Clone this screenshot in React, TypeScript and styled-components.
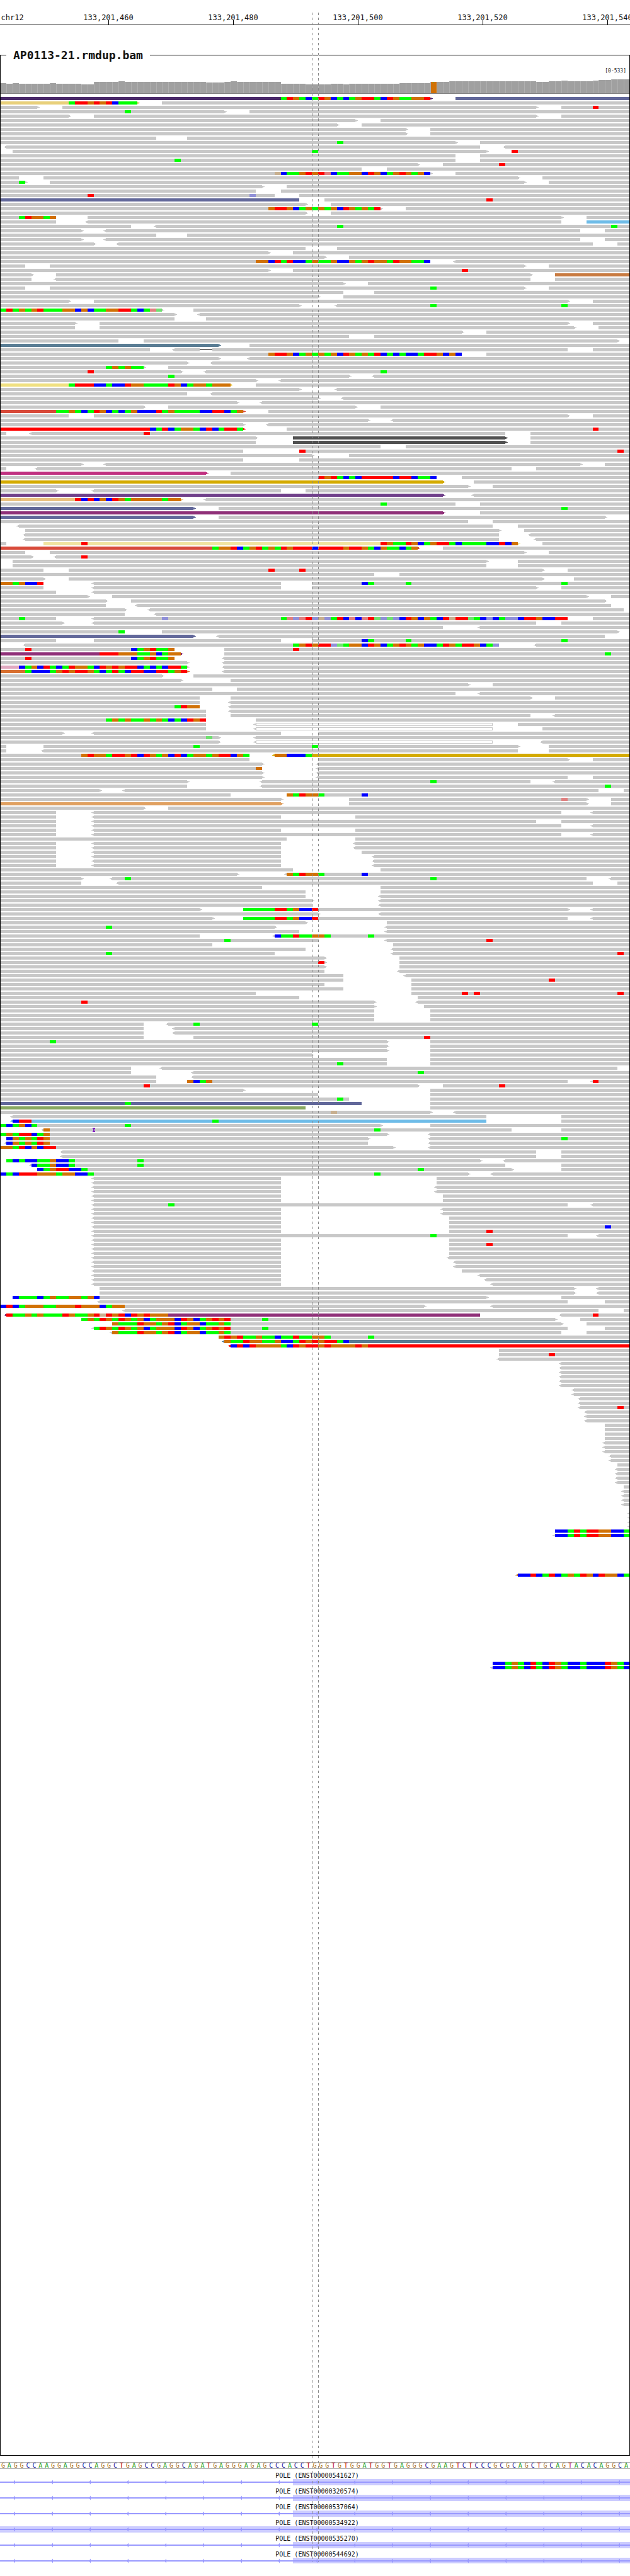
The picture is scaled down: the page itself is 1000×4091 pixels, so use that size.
import React from "react";
import styled, { createGlobalStyle } from "styled-components";

const BASE_W = 9.9;
const px = (i: number) => Math.round(BASE_W * i);

const BASE_COLOR: Record<string, string> = { A: "#00ff00", C: "#0000ff", G: "#d17105", T: "#ff0000" };
const FADED_COLOR: Record<string, string> = { a: "#70e070", c: "#9090d8", g: "#c8b090", t: "#e08080" };
const LETTER_COLOR: Record<string, string> = { A: "#20a020", C: "#2020a0", G: "#b07a30", T: "#c00000" };
const READ_COLOR: Record<string, string> = {
  p: "#4a2a6a", s: "#62689a", y: "#e8d07a", k: "#6ebce8", b: "#5a7d94", o: "#d87030", R: "#ff0000",
  d: "#505050", e: "#c87a40", r: "#d84a3a", M: "#c03080", u: "#d4aa00", v: "#70408a", t: "#e8c080",
  m: "#8f2f78", w: "#f0e4a0", i: "#e0a8c0", n: "#88a860", l: "#f0e080", q: "#e0a060",
};

const ROWS: string[] = [
  "0-69p> @45:ATGACATGCACAGTTACTGAAGGT 73-101s",
  "0-22y> @11:ATTGTGTCAAA 26-101",
  "0-6> 10-86> 90-101 @95:T",
  "0-36> 40-101 @20:A",
  "0-11> 15-86> 90-101",
  "0-57> 61-101",
  "0-54> 58-101",
  "0-65> 69-101",
  "0-65> 69-101",
  "0-25 30-101",
  "0-73> 77-101 @54:A",
  "<1-77 <81-101",
  "2-78> 82-101 @50:A @82:T",
  "0-73 77-101",
  "0-73 77-101 @28:A",
  "0-67> 71-101 @80:T",
  "0-58 62-101",
  "0-69> @44:gCAAGTGTtCAAGGCTGCAGTGAGC 73-101",
  "0-3 7-83> 87-101",
  "0-4> @3:A 8-84> 88-101",
  "0-42> 46-101",
  "0-41 45-101",
  "0-44 48-101 @14:T @40:c",
  "0-48s 52-101 @78:T",
  "0-49> 53-101",
  "0-61> @43:GTTGCAGAGAGCTGAGAT 65-101",
  "0-49> 53-101",
  "0-9 @3:ATGGAG 14-90> 94-101",
  "0-9 <14-90 94-101k",
  "0-21 <25-101 @54:A @98:A",
  "0-13> <17-93 97-101",
  "0-25 30-101",
  "0-13> <17-93 97-101",
  "0-15> <19-95 99-101",
  "0-49 54-101",
  "0-43> 47-101",
  "0-52> 56-101",
  "0-69 @41:GGCTATCCAGAAGCCGAGTGGATGGAAC <73-101",
  "0-4 8-84> 88-101",
  "0-43> 47-101 @74:T",
  "0-5> 9-85> 89-101e",
  "0-5 <9-85 89-101",
  "0-55> 59-101",
  "0-4 8-84> 88-101 @69:A",
  "0-55 60-101",
  "0-51> 55-101",
  "0-11> 15-91> 95-101",
  "0-48> <54-101 @69:A @90:A",
  "0-26> @0:ATAGAGTAAAGGCGCAAGGTTACAta 31-101",
  "0-28> <32-101",
  "0-28 33-101",
  "0-12> 16-91> 95-101",
  "0-12 16-92> 96-101",
  "0-74> 78-101",
  "0-56 60-101",
  "0-19 23-99>",
  "0-35b> 40-101",
  "0-24 <28-91 D32-34 95-101",
  "0-74 @43:GTTGCAGAGAGCTGAGATCACACCATTGCGC 78-101",
  "0-35> <40-101",
  "0-30> <34-101",
  "0-23> @17:AGAGAA 27-101",
  "0-29> @14:T <33-101 @61:A",
  "0-56> @27:A <60-101",
  "0-41> <45-101",
  "0-37l> @11:ATTTCCACCTGGAAAATGCAGGAGGG 41-101",
  "0-48> <54-101",
  "0-30 <34-101",
  "0-51> <55-101",
  "0-38> <42-101",
  "0-23> 27-57> 61-101",
  "0-39r> @9:AAGACATGCACAGCCCTAGAAAACCTTCAG 43-101",
  "0-11 15-91> 95-101",
  "0-59> <63-101",
  "0-39> <43-101",
  "0-39R> @24:CATCAGGACTCATTA 46-101 @95:T",
  "0-1 <5-81 @23:T 85-101",
  "0-41> 47-81d> 85-101",
  "0-41 47-81d> 85-101",
  "0-61 65-101",
  "0-39 48-101 @48:T @99:T",
  "0-50> 56-101",
  "0-39 48-101",
  "0-13> <17-93> 97-101",
  "0-1 <6-82 86-101",
  "0-33M> 37-101",
  "0-70 @51:TGTACACTTTTTCTTCAAC 74-101",
  "0-71u> 76-101",
  "0-75> 79-101",
  "0-9> <15-45 49-101",
  "0-71v> <76-101",
  "0-29t> @12:TCTCGCTGAGGGGGAGG <33-101",
  "0-73 @61:A 77-101",
  "0-31s> 35-101 @90:A",
  "0-71m> 77-101",
  "0-31s> 35-97>",
  "0-75 79-101",
  "<3-79 83-101",
  "4-80> 84-101",
  "<4-80 <85-101",
  "<4-80 <86-101",
  "0-1 7-83w> @13:T @61:TGAATGCAGTTACAAAACCTCG 87-101",
  "0-67r> @34:AGGTCAGTAGATGTTTCTTTTGTTGACGAACAG 71-101",
  "0-4 8-84> 88-101",
  "0-5> <9-101 @13:T",
  "2-78> 83-101",
  "2-78 83-101",
  "0-7 11-87> 91-101 @43:T @48:T",
  "0-60 64-101",
  "0-7> 11-87> 92-101",
  "0-7 @0:GGAGCCT <15-45 50-101 @58:CA @65:A @90:A",
  "0-7 <15-45 50-86> 90-101",
  "0-9 <15-101",
  "0-14> 18-94> 98-101",
  "0-17> 21-97>",
  "0-17 <22-98",
  "0-20> <24-100",
  "0-20 <25-101",
  "0-9 @3:A <15-91 @26:c @45:AtctTcgcATCtCtTacacCTGCGACTgTTaACcCAccCTTGCCTT 95-101",
  "0-10> <15-86 90-101",
  "0-71 <77-101",
  "0-20 @19:A 26-99>",
  "0-31s> <35-97",
  "0-9 15-45 50-101 @58:CA @65:A @90:A",
  "<4-80 @47:AGTGTTcaAGGCTGCAGTGAGCCATGATTGCAc <86-101",
  "0-28 @4:T @21:CAGTAAG 36-101 @47:T",
  "0-29m> @16:TTTGGGAAGCAGG 36-101 @97:A",
  "0-28 @4:T @21:CAGTAAG <36-101",
  "0-30> <36-101",
  "0-30i> @3:CAGCTACATGGACTGTGTTCACACTTA <36-101",
  "0-30o> @4:ACCCAGTGTTGACATACTTCCTTAGT <36-101",
  "0-26> 31-101",
  "0-29> 37-101",
  "0-75> 79-101",
  "0-34 38-101",
  "0-73 <77-101",
  "0-32 37-85> 89-101",
  "0-32 <37-101",
  "0-32 @28:ATGG <37-101",
  "0-33 <37-101",
  "0-33 37-85 <89-101",
  "0-33 @17:AGAGAAGAGACACTGT 41-101",
  "0-33 <41-79h 83-101",
  "0-33 <41-79h 87-101",
  "0-10> <15-45 51-101",
  "0-35> @33:a <41-101",
  "0-35> <41-79h <87-101",
  "0-1 7-83> @31:A @50:A 88-101",
  "0-1 <7-83 88-101",
  "0-40 @13:GTGGATTGTCTGAGCTCAGGAGTTCGA <44-101u @44:GGCCCA",
  "0-40 51-91> 95-101",
  "0-42> <51-101",
  "0-42 @41:G <51-101",
  "0-42> <51-101",
  "0-42> <51-91 95-101",
  "0-30> <42-85 <89-101 @69:A",
  "0-30 <42-101 @97:A",
  "0-16> <20-96 100-101",
  "0-37 46-101 @46:GATGGA @58:C",
  "0-45> 56-94> @90:t 98-101",
  "0-45q> 56-94> 98-101",
  "0-23> 27-101",
  "0-9 <15-90 <95-101",
  "0-9 <15-45 57-101",
  "0-9 <15-86 90-101",
  "0-9 <15-90 <95-101",
  "0-9 <15-45 57-101",
  "0-9 <15-90 <95-101",
  "0-46 57-101",
  "0-9 <15-45 <57-101",
  "0-9 <15-45 <57-101",
  "0-9 <15-45 58-101",
  "0-9 <15-45 <60-101",
  "0-9 <15-45 <60-101",
  "0-9 <15-45 <60-101",
  "0-47 61-101",
  "0-38> <46-101 @46:GATGGA @58:C",
  "0-13> <18-94 @20:A @69:A <98-101",
  "0-13 <19-95 99-101",
  "0-42 61-101",
  "0-49 61-101",
  "0-49 <61-101",
  "0-50> <61-101",
  "0-50 <61-101",
  "0-32> 39-91> @39:AAAAATTAGCCT <95-101",
  "0-51> <61-101",
  "0-34> 39-91 @39:AAAAATTAGCCT <95-101",
  "0-49> 62-101",
  "0-44> @17:A <62-101",
  "0-48 <62-101",
  "0-32 <44-101 @44:CAATAAGGA @59:A",
  "0-51 @36:A <62-101 @78:T",
  "0-34 63-101",
  "0-49 <63-101",
  "0-44 @17:A <63-101 @99:T",
  "0-52> 64-101",
  "0-52> @51:T 64-101",
  "0-52> 64-101",
  "0-52 <64-101",
  "0-55 <65-101",
  "0-55 66-101 @88:T",
  "0-52 66-101",
  "0-55 66-101",
  "0-41 66-101 @74:T @76:T @99:T",
  "0-48 67-101",
  "0-60> @13:T <67-101",
  "0-60> 68-101",
  "0-60 69-101",
  "0-60 69-101",
  "0-60 69-101",
  "0-23 <27-101 @31:A @50:A",
  "0-23 <28-101",
  "0-23 <28-101",
  "0-23 31-101 @68:T",
  "0-62> @8:A 69-101",
  "0-62> 69-101",
  "0-62> 69-101",
  "0-50> 69-101",
  "0-62 69-101",
  "0-62 @54:A 69-101",
  "0-21 <26-99",
  "0-21 <31-101 @67:A",
  "0-25 <31-101",
  "0-25 30-91 @30:GCAG <95-101 @95:T",
  "0-67> @23:T 71-101 @80:T",
  "0-39> 69-101",
  "0-51 69-101",
  "0-56 @54:A 69-101",
  "0-58s @20:A 69-101",
  "0-49n 69-101",
  "0-69> @53:g <73-101",
  "<2-78 90-101",
  "<2-78k @2:CTT @34:A 90-101",
  "0-61> @0:ACAGCA @20:A 69-101",
  "<7-82 @7:G @60:A I15 90-101",
  "0-62> @0:AGATTCAG <69-101",
  "1-59> @1:CGAGATG <69-101 @90:A",
  "<1-59 @1:CGAGATG <69-101",
  "0-63> @0:GGATCGCTT <69-101",
  "<10-86 90-101",
  "<10-86 90-101",
  "1-77> @1:ACACCAAGCCA @22:A <81-101",
  "<5-81 @5:CAAGCCA @22:A 90-101",
  "6-82> @6:CAGTTCCA @67:A 90-101",
  "0-75> @0:CACTTTGGGAGGCCA @60:A <79-101",
  "<15-45 70-101",
  "<15-45 70-101",
  "<15-45 <70-101",
  "<15-45 <70-101",
  "<15-45 71-101",
  "<15-45 71-101",
  "<15-91 @27:A <95-101",
  "<15-45 <71-101",
  "<15-45 <71-101",
  "<15-45 72-101",
  "<15-45 72-101",
  "<15-45 72-101 @97:C",
  "<15-45 72-101 @78:T",
  "<15-91 @69:A <96-101",
  "<15-45 72-101",
  "<15-45 72-101 @78:T",
  "<15-45 72-101",
  "<15-45 72-101",
  "<15-45 <72-101",
  "<15-45 <73-101",
  "<15-45 <73-101",
  "<15-45 74-101",
  "<15-45 <77-101",
  "<15-45 <78-101",
  "<15-45 <79-101",
  "16-92> <96-101",
  "16-92> <96-101",
  "2-78> @2:CAAACAGAAGGAGC 90-101",
  "<16-91 97-101",
  "0-68> @0:CTCAGGGAAGGGTGGGCAGG <79-101",
  "<20-96 100-101",
  "<1-77m @1:TAAGAGAAATGAAGTgTGTCTGTGGG <90-101 @95:T",
  "13-89> @13:AGATGATGAGCAGGGCTGCAGTGT @42:A 93-101",
  "18-90> @18:GAAATGGAGTCAGGCAAGA 94-101",
  "<15-91 @15:ATGATGAGCAGGGCTGCAGTGT @42:A 97-101",
  "<18-90 @18:GAAATGGAGTCAGGCAAGA 94-101",
  "35-101 @35:GTGTAAGAACAATAAGGA @59:A",
  "<36-101b @36:GAATGGAAGCCATGTGTTAC",
  "<37-101R @37:CTCTGGGGACTGTTGTGGGGTG",
  "80-101",
  "80-101 @88:T",
  "<80-101",
  "<90-101", "<90-101", "<90-101", "<90-101", "<90-101", "<90-101",
  "<92-101", "<92-101",
  "<93-101", "<93-101", "<93-101 @99:T",
  "<94-101", "<94-101", "<94-101",
  "97-101", "97-101", "97-101", "97-101",
  "<97-101", "<97-101", "<97-101",
  "<98-101", "<98-101",
  "99-101",
  "<99-101", "<99-101", "<99-101", "<99-101",
  "100-101",
  "<100-101", "<100-101", "<100-101", "<100-101",
  "",
  "<101-101", "<101-101", "<101-101", "<101-101",
  "89-101 @89:CCATATTGGCCA",
  "<89-101 @89:CCATATTGGCCA",
];
ROWS[335] = "<83-101e @83:CCTCATCAGATGCTGGCA";
ROWS[355] = "79-101 @79:CCAGACTACTGACCACCCTGAC";
ROWS[356] = "<79-101 @79:CCAGACTACTGACCACCCTGAC";

const COVERAGE: number[] = [
  16, 15, 16, 15, 15, 15, 15, 15, 16, 15, 15, 15, 15, 14, 14, 18, 18, 18, 18, 19, 18, 18, 18, 18, 18, 18, 18, 18, 18, 18,
  18, 18, 18, 17, 17, 17, 18, 19, 18, 18, 18, 18, 18, 18, 18, 15, 15, 15, 15, 14, 14, 14, 14, 15, 15, 14, 15, 15, 15, 15,
  15, 15, 15, 15, 16, 16, 16, 16, 16, 18, 18, 18, 19, 19, 19, 19, 19, 19, 19, 19, 19, 19, 19, 19, 19, 19, 18, 18, 19, 19,
  20, 19, 19, 19, 19, 20, 21, 21, 22, 22, 22,
];

const SEQUENCE =
  "GAGGCCAAGGAGGCCAGGCTGAGCCGAGGCAGATGAGGGAGAGCCCACCTGGGTGTGGATGGTGAGGGCGAAGTCTCCCGCGCAGCTGCAGTACACAGGCA";

const GENES = [
  { id: "ENST00000541627", exonFrom: 465, last: false },
  { id: "ENST00000320574", exonFrom: 465, last: false },
  { id: "ENST00000537064", exonFrom: 465, last: false },
  { id: "ENST00000534922", exonFrom: 0, last: false },
  { id: "ENST00000535270", exonFrom: 465, last: false },
  { id: "ENST00000544692", exonFrom: 465, last: true },
];

const TICKS = [
  { x: 172, label: "133,201,460" },
  { x: 370, label: "133,201,480" },
  { x: 568, label: "133,201,500" },
  { x: 766, label: "133,201,520" },
  { x: 964, label: "133,201,540" },
];

const GlobalStyle = createGlobalStyle`
  html, body { margin: 0; padding: 0; background: #fff; }
  body { font-family: "DejaVu Sans Mono", monospace; }
`;

const Page = styled.div`
  position: relative;
  width: 1000px;
  height: 4091px;
  overflow: hidden;
`;

const RulerSvg = styled.svg`
  display: block;
  width: 1000px;
  height: 40px;
`;

const RulerText = styled.text`
  font-family: "DejaVu Sans Mono", monospace;
  font-size: 12px;
  fill: #111;
`;

const TrackFrame = styled.fieldset`
  box-sizing: border-box;
  width: 1000px;
  height: 3824px;
  margin: 36px 0 0;
  padding: 0;
  border: 1px solid #000;
  min-width: 0;
`;

const TrackTitle = styled.legend`
  margin-left: 9px;
  padding: 0 11px;
  height: 23px;
  line-height: 23px;
  font-family: "DejaVu Sans Mono", monospace;
  font-weight: 700;
  font-size: 18px;
  color: #111;
`;

const Coverage = styled.div`
  position: relative;
  height: 50px;
`;

const RangeLabel = styled.span`
  position: absolute;
  right: 5px;
  top: 9px;
  font-size: 8px;
  line-height: 10px;
  color: #222;
`;

const TrackSvg = styled.svg`
  display: block;
  width: 998px;
`;

const SequenceBar = styled.div`
  display: grid;
  grid-template-columns: repeat(101, 9.9px);
  width: 1000px;
  height: 9px;
  margin-top: 10px;
  border-top: 1px solid #aaa;
  border-bottom: 1px solid #aaa;
  overflow: hidden;
`;

const BaseLetter = styled.span<{ $base: string }>`
  text-align: center;
  font-size: 10px;
  line-height: 9px;
  color: ${(p) => LETTER_COLOR[p.$base]};
`;

const GeneList = styled.div`
  display: flex;
  flex-direction: column;
  margin-top: 1px;
`;

const GeneRow = styled.div`
  display: flex;
  flex-direction: column;
  height: 25px;
`;

const GeneLabel = styled.div`
  box-sizing: border-box;
  height: 15px;
  padding: 5px 0 0 7px;
  line-height: 10px;
  font-size: 10px;
  text-align: center;
  white-space: pre;
  color: #111;
`;

const GeneBand = styled.svg`
  display: block;
  width: 1000px;
  height: 10px;
`;

const Guide = styled.div<{ $x: number }>`
  position: absolute;
  top: 20px;
  left: ${(p) => p.$x}px;
  width: 1px;
  height: 4049px;
  background: repeating-linear-gradient(to bottom, #888 0 4px, transparent 4px 8px);
`;

type Read = { start: number; end: number; color: string; left: boolean; right: boolean; hollow: boolean };

function parseRow(row: string) {
  const reads: Read[] = [];
  const marks: { start: number; seq: string }[] = [];
  const dels: [number, number][] = [];
  const ins: number[] = [];
  for (const tok of row.split(" ")) {
    if (!tok) continue;
    if (tok[0] === "@") {
      const [p, seq] = tok.slice(1).split(":");
      marks.push({ start: Number(p), seq });
    } else if (tok[0] === "D") {
      const [a, b] = tok.slice(1).split("-");
      dels.push([Number(a), Number(b)]);
    } else if (tok[0] === "I") {
      ins.push(Number(tok.slice(1)));
    } else {
      const m = tok.match(/^(<)?(\d+)-(\d+)([a-zA-Z])?(>)?$/);
      if (!m) continue;
      reads.push({
        start: Number(m[2]),
        end: Number(m[3]),
        color: m[4] && READ_COLOR[m[4]] ? READ_COLOR[m[4]] : "#c8c8c8",
        left: !!m[1],
        right: !!m[5],
        hollow: m[4] === "h",
      });
    }
  }
  return { reads, marks, dels, ins };
}

function ReadRow({ row, index }: { row: string; index: number }) {
  const y = 5 + 7 * index;
  const { reads, marks, dels, ins } = parseRow(row);
  return (
    <g shapeRendering="crispEdges">
      {reads.map((r, k) => {
        const x0 = px(r.start);
        const x1 = px(r.end);
        const tail = r.hollow ? "#c8c8c8" : r.color;
        return (
          <g key={k}>
            {r.hollow ? (
              <rect x={x0 + 0.5} y={y + 0.5} width={x1 - x0 - 1} height={4} fill="#fff" stroke="#c8c8c8" />
            ) : (
              <rect x={x0} y={y} width={x1 - x0} height={5} fill={r.color} />
            )}
            {r.left && (
              <>
                <rect x={x0 - 2} y={y + 1} width={2} height={3} fill={tail} />
                <rect x={x0 - 4} y={y + 2} width={2} height={1} fill={tail} />
              </>
            )}
            {r.right && (
              <>
                <rect x={x1} y={y + 1} width={2} height={3} fill={tail} />
                <rect x={x1 + 2} y={y + 2} width={2} height={1} fill={tail} />
              </>
            )}
          </g>
        );
      })}
      {dels.map(([a, b], k) => (
        <g key={k}>
          <rect x={px(a)} y={y} width={px(b) - px(a)} height={5} fill="#fff" />
          <rect x={px(a)} y={y + 2} width={px(b) - px(a)} height={1} fill="#000" />
        </g>
      ))}
      {marks.map((m, k) =>
        m.seq.split("").map((c, j) => (
          <rect
            key={`${k}-${j}`}
            x={px(m.start + j)}
            y={y}
            width={px(m.start + j + 1) - px(m.start + j)}
            height={5}
            fill={BASE_COLOR[c] || FADED_COLOR[c]}
          />
        ))
      )}
      {ins.map((b, k) => (
        <g key={k} fill="#8020c0">
          <rect x={px(b) - 2} y={y - 1} width={4} height={2} />
          <rect x={px(b) - 1} y={y - 1} width={2} height={7} />
          <rect x={px(b) - 2} y={y + 4} width={4} height={2} />
        </g>
      ))}
    </g>
  );
}

function GeneTrack({ exonFrom, last }: { exonFrom: number; last: boolean }) {
  const chevrons = Array.from({ length: 17 }, (_, k) => 22 + 60 * k);
  return (
    <GeneBand viewBox="0 0 1000 10">
      <rect x={exonFrom} y={0} width={1000 - exonFrom} height={last ? 9 : 10} fill="#ccccff" shapeRendering="crispEdges" />
      <rect x={0} y={4} width={1000} height={2} fill="#9999ff" shapeRendering="crispEdges" />
      {chevrons.map((x) => (
        <path key={x} d={`M${x + 2},1.5 L${x - 1},5 L${x + 2},8.5 Z`} fill="#9999ff" />
      ))}
    </GeneBand>
  );
}

export default function App() {
  return (
    <Page>
      <GlobalStyle />
      <RulerSvg viewBox="0 0 1000 40">
        <RulerText x={1.5} y={32}>chr12</RulerText>
        {TICKS.map((t) => (
          <g key={t.x}>
            <RulerText x={t.x} y={32} textAnchor="middle">{t.label}</RulerText>
            <rect x={t.x} y={32} width={1} height={7} fill="#000" />
          </g>
        ))}
        <rect x={0} y={39} width={1000} height={1} fill="#000" />
      </RulerSvg>

      <TrackFrame>
        <TrackTitle>AP0113-21.rmdup.bam</TrackTitle>
        <Coverage>
          <RangeLabel>[0-533]</RangeLabel>
          <TrackSvg viewBox="1 99 998 50" height={50} shapeRendering="crispEdges">
            {COVERAGE.map((h, i) => (
              <g key={i}>
                <rect x={px(i)} y={148 - h} width={px(i + 1) - px(i)} height={h} fill="#b0b0b0" />
                <rect x={px(i) + 1} y={148 - h} width={px(i + 1) - px(i) - 1} height={h} fill={i === 69 ? "#d17105" : "#a0a0a0"} />
              </g>
            ))}
            <rect x={688} y={130} width={1} height={1} fill="#00ff00" />
            <rect x={0} y={148} width={1000} height={1} fill="#808080" />
          </TrackSvg>
        </Coverage>
        <TrackSvg viewBox="1 0 998 3750" height={3750}>
          {ROWS.map((row, i) => (
            <ReadRow key={i} row={row} index={i} />
          ))}
        </TrackSvg>
      </TrackFrame>

      <SequenceBar>
        {SEQUENCE.split("").map((c, i) => (
          <BaseLetter key={i} $base={c}>{c}</BaseLetter>
        ))}
      </SequenceBar>

      <GeneList>
        {GENES.map((g) => (
          <GeneRow key={g.id}>
            <GeneLabel>{`POLE (${g.id})`}</GeneLabel>
            <GeneTrack exonFrom={g.exonFrom} last={g.last} />
          </GeneRow>
        ))}
      </GeneList>

      <Guide $x={495} />
      <Guide $x={505} />
    </Page>
  );
}
